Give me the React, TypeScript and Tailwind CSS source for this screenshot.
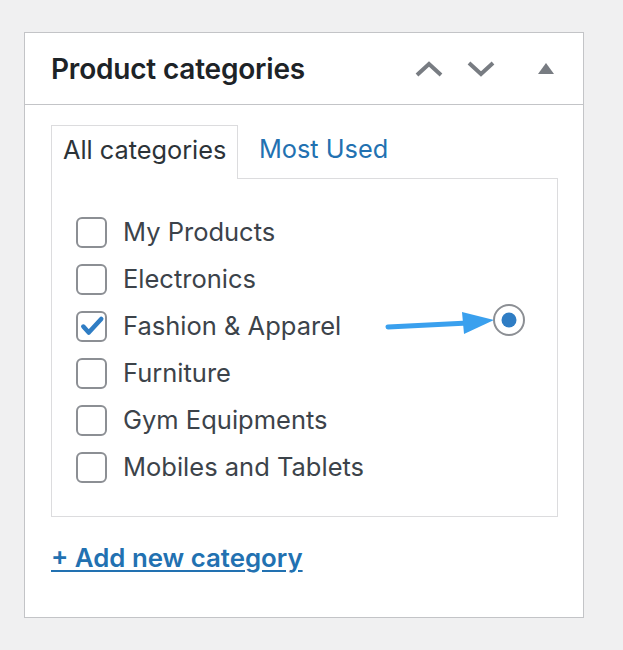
const CATEGORIES = [
  { name: "My Products", checked: false },
  { name: "Electronics", checked: false },
  { name: "Fashion & Apparel", checked: true },
  { name: "Furniture", checked: false },
  { name: "Gym Equipments", checked: false },
  { name: "Mobiles and Tablets", checked: false },
];

function Checkbox({ checked }: { checked: boolean }) {
  return (
    <span className="flex h-[31px] w-[31px] shrink-0 items-center justify-center rounded-[6px] border-2 border-[#8c8f94] bg-white">
      {checked && (
        <svg viewBox="0 0 24 24" className="h-[26px] w-[26px]">
          <path
            d="M4 12.5l5 5.5L20.5 5.5"
            fill="none"
            stroke="#2f7dc4"
            strokeWidth="4.2"
            strokeLinecap="round"
            strokeLinejoin="round"
          />
        </svg>
      )}
    </span>
  );
}

export default function App() {
  return (
    <div
      className="h-[650px] w-full bg-[#f0f0f1] pl-[24px] pt-[32px]"
      style={{ fontFamily: "Inter, 'Noto Sans', sans-serif" }}
    >
      <div className="flex h-[586px] w-[560px] flex-col border border-[#c3c4c7] bg-white">
        {/* header */}
        <div className="flex h-[72px] items-center justify-between border-b border-[#c3c4c7] pl-[26px] pr-[29px]">
          <h2 className="text-[28px] font-semibold tracking-[-0.2px] text-[#1d2327]">Product categories</h2>
          <div className="flex items-center">
            <svg width="28" height="16" viewBox="0 0 28 16">
              <path d="M2 14 L14 3 L26 14" fill="none" stroke="#787c82" strokeWidth="4" />
            </svg>
            <svg className="ml-[24px]" width="28" height="16" viewBox="0 0 28 16">
              <path d="M2 2 L14 13 L26 2" fill="none" stroke="#787c82" strokeWidth="4" />
            </svg>
            <span className="ml-[43px] h-0 w-0 border-x-[8px] border-b-[11px] border-x-transparent border-b-[#787c82]" />
          </div>
        </div>

        {/* body */}
        <div className="px-[26px] pt-[20px]">
          <div className="flex items-end">
            <div className="relative z-10 -mb-px flex h-[54px] w-[187px] items-center border border-b-0 border-[#dcdcde] bg-white pb-[5px] pl-[11px] text-[25.3px] text-[#2c3338]">
              All categories
            </div>
            <div className="flex h-[53px] items-center pb-[5px] pl-[21px] text-[25.3px] text-[#2271b1]">Most Used</div>
          </div>

          <div className="relative h-[339px] w-[507px] border border-[#dcdcde] pl-[24px] pt-[37px]">
            <ul className="flex flex-col gap-[15px]">
              {CATEGORIES.map((c) => (
                <li key={c.name} className="flex h-[32px] items-center gap-[16px] text-[25.5px] text-[#3c434a]">
                  <Checkbox checked={c.checked} />
                  <span>{c.name}</span>
                </li>
              ))}
            </ul>

            {/* annotation arrow + radio */}
            <svg className="absolute left-[330px] top-[120px]" width="160" height="40" viewBox="0 0 160 40">
              <path d="M6 28 L86 24" stroke="#3aa0ee" strokeWidth="5" strokeLinecap="round" />
              <path d="M80 13 L112 21 L82 35 Z" fill="#3aa0ee" />
              <circle cx="127" cy="21" r="15" fill="white" stroke="#8c8f94" strokeWidth="2" />
              <circle cx="127" cy="21" r="7.5" fill="#2f7dc4" />
            </svg>
          </div>

          <div className="pt-[22px]">
            <a className="text-[25.8px] font-semibold text-[#2271b1] underline underline-offset-[3px]">+ Add new category</a>
          </div>
        </div>
      </div>
    </div>
  );
}
